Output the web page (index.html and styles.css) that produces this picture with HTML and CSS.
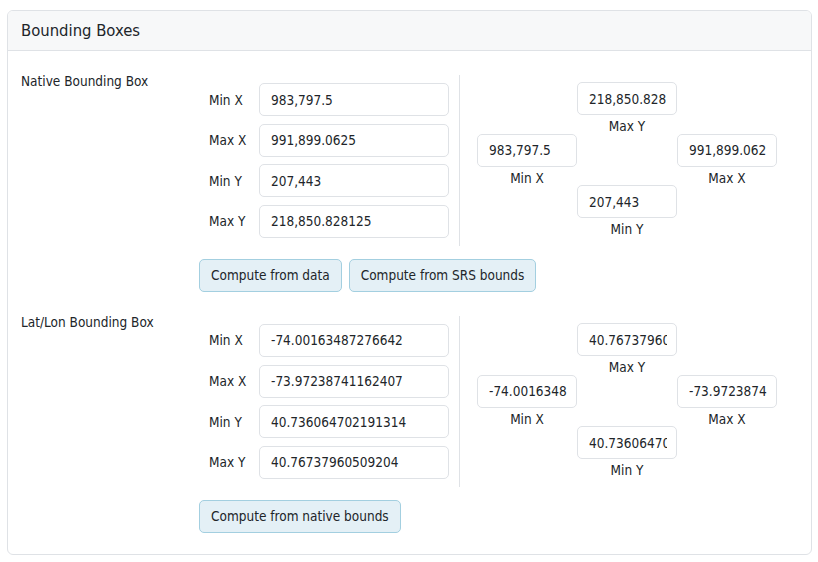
FILE: index.html
```html
<!DOCTYPE html>
<html lang="en">
<head>
    <meta charset="UTF-8">
    <title>Bounding Boxes</title>
    <link rel="stylesheet" href="styles.css">
</head>
<body>
    <div class="card">
        <div class="card-header">Bounding Boxes</div>
        <div class="card-body">
            <!-- native bbox -->
            <div class="bbox-section">
                <div class="section-label">Native Bounding Box</div>
                <div class="section-main">
                    <div class="bbox-row">
                        <div class="bbox-fields">
                            <div class="field-row"><label>Min X</label><input class="field-input" value="983,797.5"></div>
                            <div class="field-row"><label>Max X</label><input class="field-input" value="991,899.0625"></div>
                            <div class="field-row"><label>Min Y</label><input class="field-input" value="207,443"></div>
                            <div class="field-row"><label>Max Y</label><input class="field-input" value="218,850.828125"></div>
                        </div>
                        <div class="bbox-visual">
                            <div class="cell cell-top"><input class="cell-input" value="218,850.828"><span>Max Y</span></div>
                            <div class="cell cell-left"><input class="cell-input" value="983,797.5"><span>Min X</span></div>
                            <div class="cell cell-right"><input class="cell-input" value="991,899.062"><span>Max X</span></div>
                            <div class="cell cell-bottom"><input class="cell-input" value="207,443"><span>Min Y</span></div>
                        </div>
                    </div>
                    <div class="bbox-actions">
                        <button class="btn-compute">Compute from data</button>
                        <button class="btn-compute">Compute from SRS bounds</button>
                    </div>
                </div>
            </div>
            <!-- lat/lon bbox -->
            <div class="bbox-section">
                <div class="section-label">Lat/Lon Bounding Box</div>
                <div class="section-main">
                    <div class="bbox-row">
                        <div class="bbox-fields">
                            <div class="field-row"><label>Min X</label><input class="field-input" value="-74.00163487276642"></div>
                            <div class="field-row"><label>Max X</label><input class="field-input" value="-73.97238741162407"></div>
                            <div class="field-row"><label>Min Y</label><input class="field-input" value="40.736064702191314"></div>
                            <div class="field-row"><label>Max Y</label><input class="field-input" value="40.76737960509204"></div>
                        </div>
                        <div class="bbox-visual">
                            <div class="cell cell-top"><input class="cell-input" value="40.76737960509204"><span>Max Y</span></div>
                            <div class="cell cell-left"><input class="cell-input" value="-74.00163487276642"><span>Min X</span></div>
                            <div class="cell cell-right"><input class="cell-input" value="-73.97238741162407"><span>Max X</span></div>
                            <div class="cell cell-bottom"><input class="cell-input" value="40.736064702191314"><span>Min Y</span></div>
                        </div>
                    </div>
                    <div class="bbox-actions">
                        <button class="btn-compute">Compute from native bounds</button>
                    </div>
                </div>
            </div>
        </div>
    </div>
</body>
</html>
```

FILE: styles.css
```css
/* base */
body {
    margin: 0;
    padding: 10px 6px 0 7px;
    font-family: "DejaVu Sans Condensed", "DejaVu Sans", sans-serif;
    font-size: 13.5px;
    color: #212529;
    background-color: #fff;
}

/* card */
.card {
    border: 1px solid #dfe2e6;
    border-radius: 6px;
    overflow: hidden;
}

.card-header {
    height: 39px;
    line-height: 40px;
    padding: 0 13px;
    background-color: #f7f8f9;
    border-bottom: 1px solid #dfe2e6;
    font-size: 16.5px;
}

.card-body {
    padding: 20px 13px 21px 13px;
}

/* sections */
.bbox-section {
    display: flex;
}

.bbox-section + .bbox-section {
    margin-top: 20px;
}

.section-label {
    width: 178px;
    flex-shrink: 0;
    line-height: 20px;
}

.section-main {
    padding-top: 4px;
}

.bbox-row {
    display: flex;
    align-items: center;
}

/* left: labelled fields */
.bbox-fields {
    display: flex;
    flex-direction: column;
    gap: 7.67px;
    padding: 8px 10px;
    border-right: 1px solid #dfe2e6;
}

.field-row {
    display: flex;
    align-items: center;
}

.field-row label {
    width: 50px;
}

.field-input, .cell-input {
    box-sizing: border-box;
    height: 33px;
    border: 1px solid #dfe2e6;
    border-radius: 5px;
    font-family: inherit;
    font-size: 13.5px;
    color: #212529;
    background: #fff;
    outline: none;
}

.field-input {
    width: 190px;
    padding: 0 10px 0 11px;
}

/* right: box diagram */
.bbox-visual {
    display: grid;
    grid-template-columns: repeat(3, 100px);
    grid-template-rows: repeat(3, 51.5px);
    margin-left: 17px;
    margin-bottom: 2px;
}

.cell {
    display: flex;
    flex-direction: column;
    align-items: center;
}

.cell span {
    padding-top: 5px;
    line-height: 13.5px;
}

.cell-input {
    width: 100px;
    padding: 0 9px 0 11px;
}

.cell-top { grid-column: 2; grid-row: 1; }
.cell-left { grid-column: 1; grid-row: 2; }
.cell-right { grid-column: 3; grid-row: 2; }
.cell-bottom { grid-column: 2; grid-row: 3; }

/* buttons */
.bbox-actions {
    display: flex;
    gap: 7px;
    margin-top: 13px;
}

.btn-compute {
    height: 33px;
    padding: 0 11px;
    border: 1px solid #a3cfe0;
    border-radius: 5px;
    background-color: #e4f0f6;
    color: #212529;
    font-family: inherit;
    font-size: 13.5px;
    cursor: pointer;
}
```
